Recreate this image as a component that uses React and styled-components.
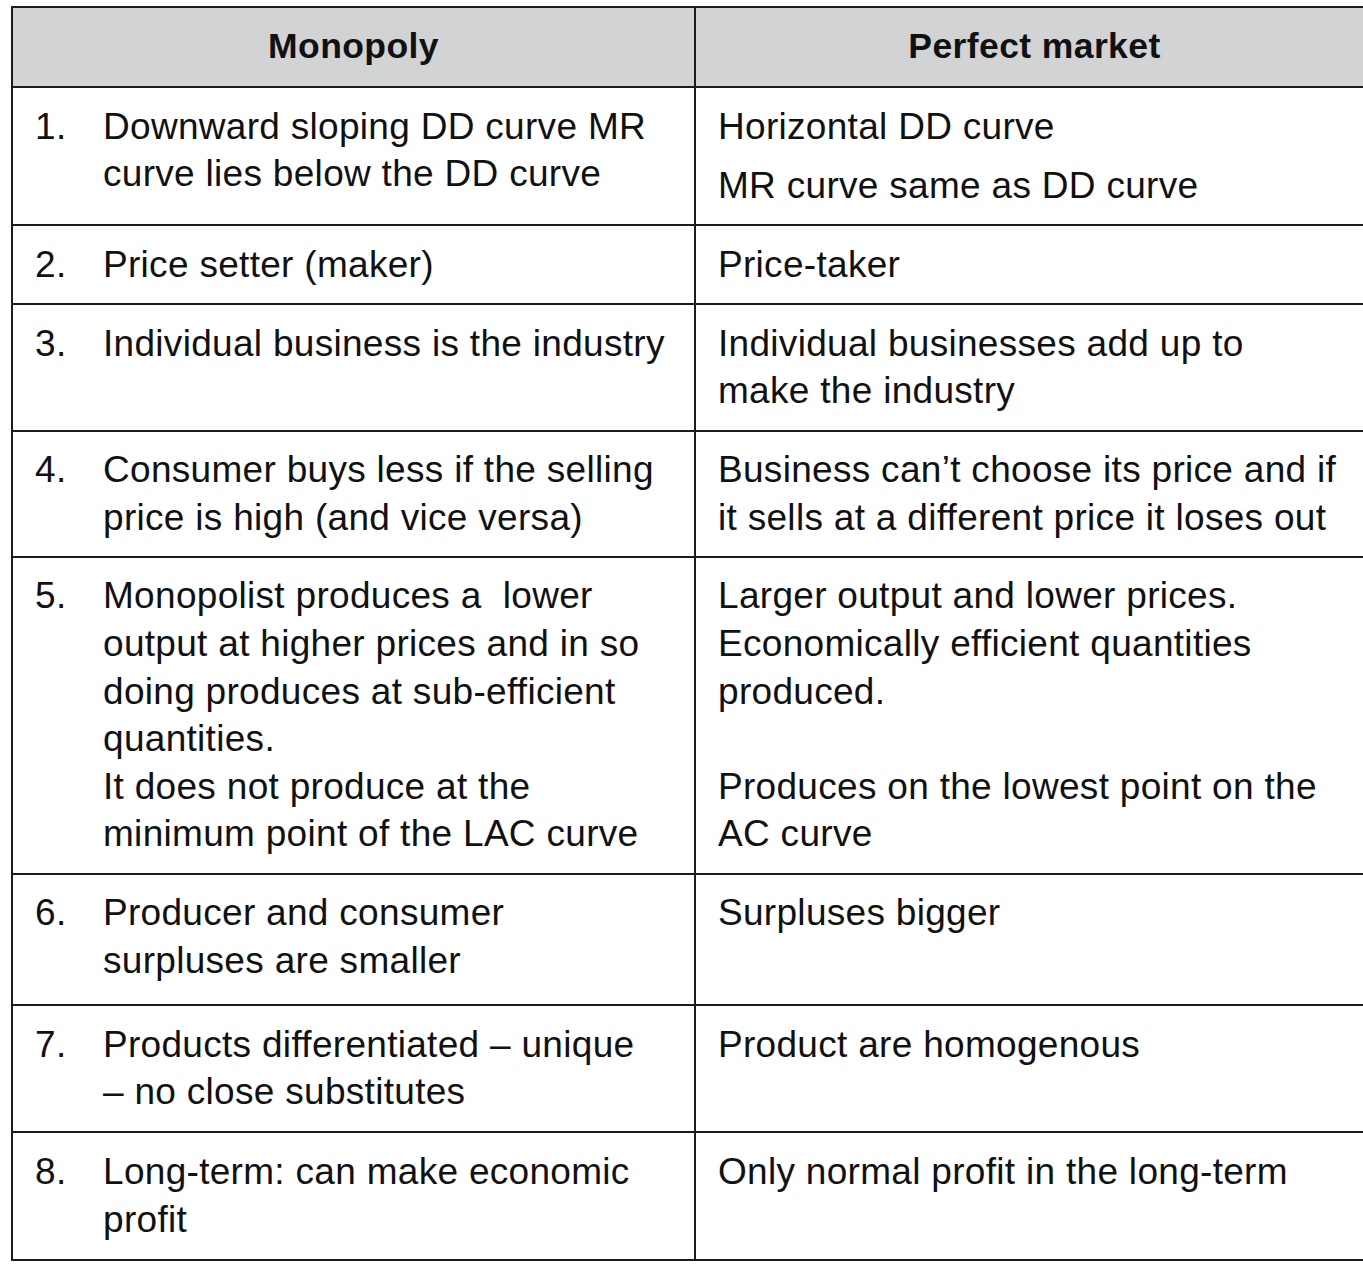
import styled, { createGlobalStyle } from "styled-components";

const GlobalStyle = createGlobalStyle`
  html, body {
    margin: 0;
    padding: 0;
    background: #ffffff;
    overflow: hidden;
  }
  body {
    font-family: "Liberation Sans", Arial, sans-serif;
    color: #111111;
  }
`;

const rows = [
  {
    num: "1.",
    left: ["Downward sloping DD curve MR", "curve lies below the DD curve"],
    right: [["Horizontal DD curve"], ["MR curve same as DD curve"]],
  },
  {
    num: "2.",
    left: ["Price setter (maker)"],
    right: [["Price-taker"]],
  },
  {
    num: "3.",
    left: ["Individual business is the industry"],
    right: [["Individual businesses add up to", "make the industry"]],
  },
  {
    num: "4.",
    left: ["Consumer buys less if the selling", "price is high (and vice versa)"],
    right: [
      [
        "Business can\u2019t choose its price and if",
        "it sells at a different price it loses out",
      ],
    ],
  },
  {
    num: "5.",
    left: [
      "Monopolist produces a\u00a0 lower",
      "output at higher prices and in so",
      "doing produces at sub-efficient",
      "quantities.",
      "It does not produce at the",
      "minimum point of the LAC curve",
    ],
    right: [
      [
        "Larger output and lower prices.",
        "Economically efficient quantities",
        "produced.",
        "\u00a0",
        "Produces on the lowest point on the",
        "AC curve",
      ],
    ],
  },
  {
    num: "6.",
    left: ["Producer and consumer", "surpluses are smaller"],
    right: [["Surpluses bigger"]],
    extra: 5,
  },
  {
    num: "7.",
    left: ["Products differentiated \u2013 unique", "\u2013 no close substitutes"],
    right: [["Product are homogenous"]],
    extra: 1,
  },
  {
    num: "8.",
    left: ["Long-term: can make economic", "profit"],
    right: [["Only normal profit in the long-term"]],
    extra: 1,
  },
];

const Page = () => (
  <Sheet>
    <Table>
      <colgroup>
        <col style={{ width: "683px" }} />
        <col />
      </colgroup>
      <thead>
        <tr>
          <HeadCell>Monopoly</HeadCell>
          <HeadCell>Perfect market</HeadCell>
        </tr>
      </thead>
      <tbody>
        {rows.map((row) => (
          <tr key={row.num}>
            <Cell $extra={row.extra}>
              <Item>
                <Num>{row.num}</Num>
                <div>
                  {row.left.map((line, i) => (
                    <Line key={i}>{line}</Line>
                  ))}
                </div>
              </Item>
            </Cell>
            <Cell $extra={row.extra}>
              {row.right.map((para, i) => (
                <Para key={i}>
                  {para.map((line, j) => (
                    <Line key={j}>{line}</Line>
                  ))}
                </Para>
              ))}
            </Cell>
          </tr>
        ))}
      </tbody>
    </Table>
  </Sheet>
);

const App = () => (
  <>
    <GlobalStyle />
    <Page />
  </>
);

const Sheet = styled.div`
  width: 100vw;
  overflow: hidden;
  padding: 6px 0 0 11px;
  box-sizing: border-box;
`;

const Table = styled.table`
  width: 1364px;
  table-layout: fixed;
  border-collapse: collapse;
  font-size: 37px;
  line-height: 47.6px;
  letter-spacing: 0.3px;
`;

const HeadCell = styled.th`
  background: #d1d3d4;
  border: 2px solid #1c1c1c;
  padding: 15.2px 0;
  font-weight: bold;
  font-size: 35.5px;
  letter-spacing: 0.4px;
  text-align: center;
`;

const Cell = styled.td`
  border: 2px solid #1c1c1c;
  padding: 14.6px 10px ${(p) => 14.6 + (p.$extra || 0)}px 22px;
  vertical-align: top;
  text-align: left;
`;

const Item = styled.div`
  display: flex;
`;

const Num = styled.div`
  flex: 0 0 68px;
`;

const Para = styled.div`
  & + & {
    margin-top: 12px;
  }
`;

const Line = styled.div`
  white-space: nowrap;
`;

export default App;
